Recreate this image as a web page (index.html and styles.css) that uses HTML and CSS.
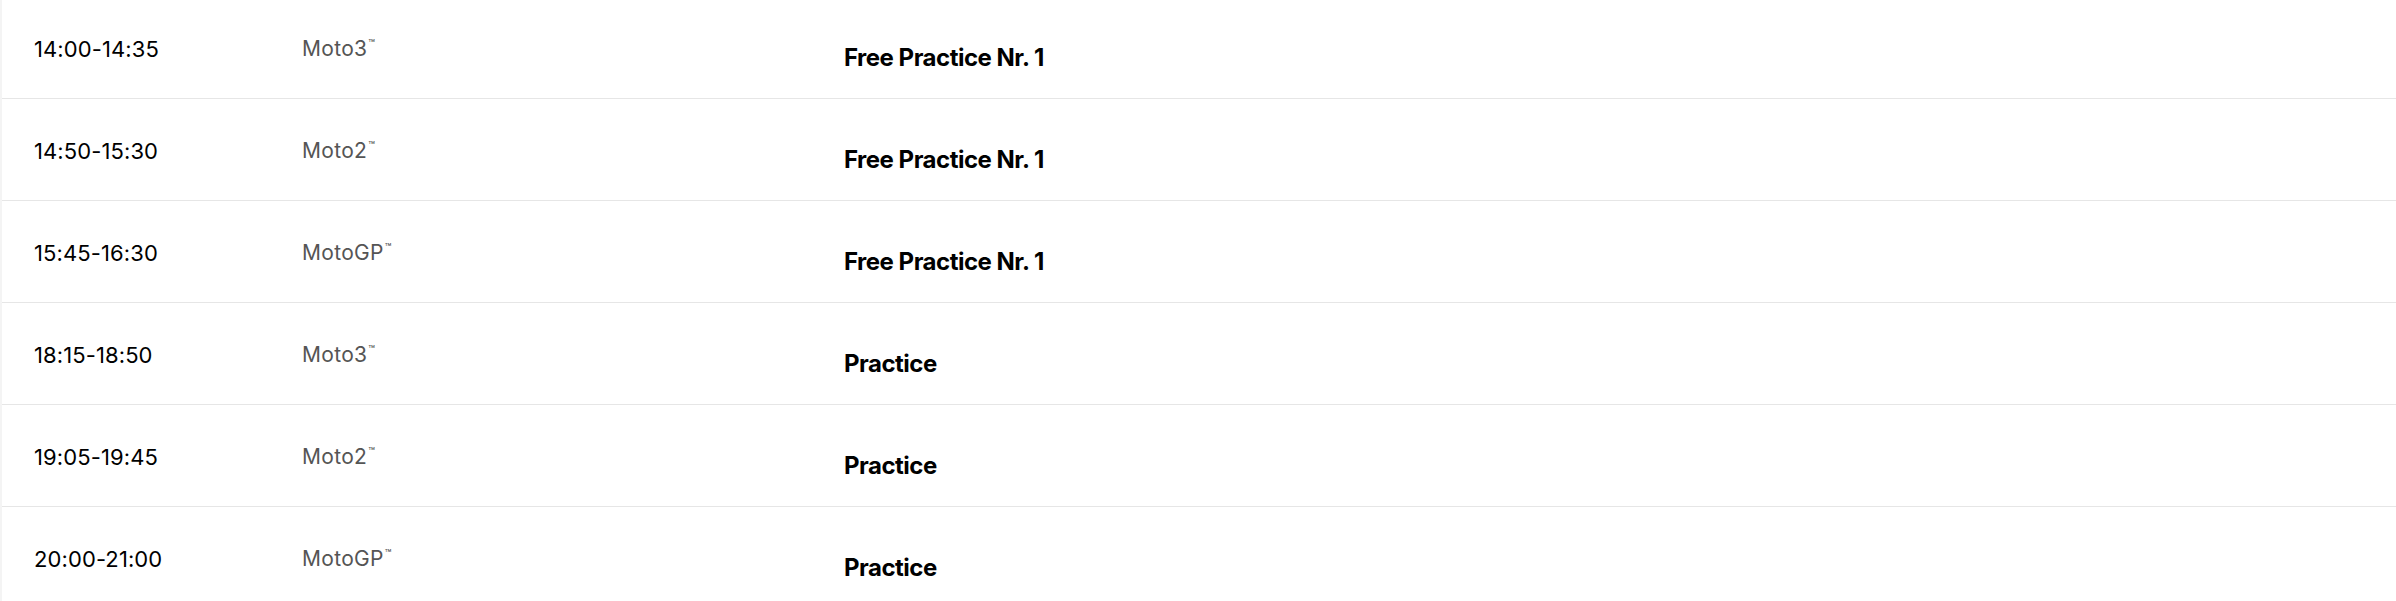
FILE: index.html
```html
<!DOCTYPE html>
<html lang="en">
<head>
<meta charset="utf-8">
<title>Schedule</title>
<link rel="stylesheet" href="styles.css">
</head>
<body>
<div class="schedule">
  <div class="row">
    <div class="time">14:00-14:35</div>
    <div class="cat">Moto3<sup>™</sup></div>
    <div class="title">Free Practice Nr. 1</div>
  </div>
  <div class="row">
    <div class="time">14:50-15:30</div>
    <div class="cat">Moto2<sup>™</sup></div>
    <div class="title">Free Practice Nr. 1</div>
  </div>
  <div class="row">
    <div class="time">15:45-16:30</div>
    <div class="cat">MotoGP<sup>™</sup></div>
    <div class="title">Free Practice Nr. 1</div>
  </div>
  <div class="row">
    <div class="time">18:15-18:50</div>
    <div class="cat">Moto3<sup>™</sup></div>
    <div class="title">Practice</div>
  </div>
  <div class="row">
    <div class="time">19:05-19:45</div>
    <div class="cat">Moto2<sup>™</sup></div>
    <div class="title">Practice</div>
  </div>
  <div class="row">
    <div class="time">20:00-21:00</div>
    <div class="cat">MotoGP<sup>™</sup></div>
    <div class="title">Practice</div>
  </div>
</div>
</body>
</html>
```
FILE: styles.css
```css
html, body {
  margin: 0;
  padding: 0;
  background: #fff;
  overflow: hidden;
}
body {
  font-family: Inter, "Liberation Sans", sans-serif;
  color: #000;
}
.schedule {
  border-left: 2px solid #f4f4f4;
  margin-top: -3px;
}
.row {
  display: grid;
  grid-template-columns: 268px 542px 1fr;
  padding-left: 32px;
  height: 101px;
  border-bottom: 1px solid #e6e6e6;
}
.time {
  font-size: 22px;
  line-height: 26px;
  padding-top: 39px;
  letter-spacing: 0.1px;
}
.cat {
  font-size: 21px;
  line-height: 26px;
  padding-top: 39px;
  color: #555;
  letter-spacing: 0.3px;
}
.cat sup {
  font-size: 11px;
  line-height: 0;
  vertical-align: 9px;
  margin-left: 1px;
  letter-spacing: 0;
}
.title {
  font-size: 24px;
  line-height: 30px;
  padding-top: 46px;
  font-weight: 700;
  letter-spacing: -0.5px;
}
```
